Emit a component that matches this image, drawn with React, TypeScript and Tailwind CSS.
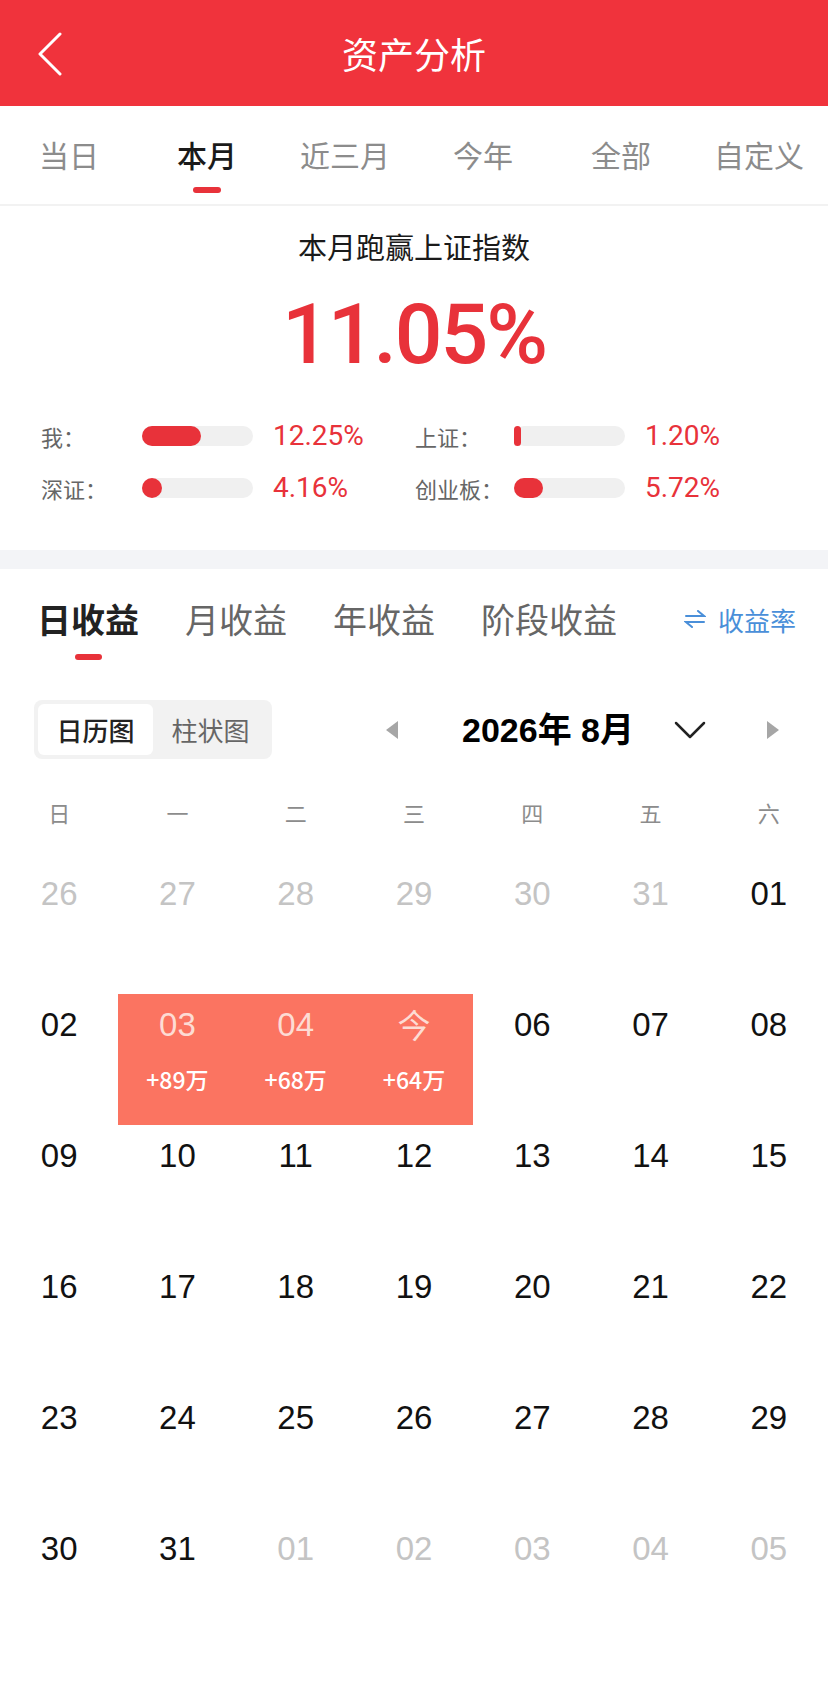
import React from 'react';

const cjk = { fontFamily: '"Noto Sans CJK SC", "Noto Sans", sans-serif' };
const num = { fontFamily: '"Liberation Sans", "Noto Sans CJK SC", sans-serif' };
const din = { fontFamily: 'Roboto, "Noto Sans CJK SC", sans-serif' };

type Day = { label: string; muted?: boolean; hot?: boolean; gain?: string };

const weeks: Day[][] = [
  [
    { label: '26', muted: true },
    { label: '27', muted: true },
    { label: '28', muted: true },
    { label: '29', muted: true },
    { label: '30', muted: true },
    { label: '31', muted: true },
    { label: '01' },
  ],
  [
    { label: '02' },
    { label: '03', hot: true, gain: '+89万' },
    { label: '04', hot: true, gain: '+68万' },
    { label: '今', hot: true, gain: '+64万' },
    { label: '06' },
    { label: '07' },
    { label: '08' },
  ],
  ['09', '10', '11', '12', '13', '14', '15'].map((d) => ({ label: d })),
  ['16', '17', '18', '19', '20', '21', '22'].map((d) => ({ label: d })),
  ['23', '24', '25', '26', '27', '28', '29'].map((d) => ({ label: d })),
  [
    { label: '30' },
    { label: '31' },
    { label: '01', muted: true },
    { label: '02', muted: true },
    { label: '03', muted: true },
    { label: '04', muted: true },
    { label: '05', muted: true },
  ],
];

function Bar({ fill }: { fill: number }) {
  return (
    <div className="h-[20px] rounded-full bg-[#f0f0f0] w-full">
      <div className="h-[20px] rounded-full bg-[#e8323a]" style={{ width: fill }} />
    </div>
  );
}

export default function App() {
  const periods = ['当日', '本月', '近三月', '今年', '全部', '自定义'];
  const kinds = ['日收益', '月收益', '年收益', '阶段收益'];
  const weekdays = ['日', '一', '二', '三', '四', '五', '六'];

  return (
    <div className="w-[828px] min-h-[1697px] bg-white" style={cjk}>
      {/* header */}
      <div className="relative h-[106px] bg-[#f0333c] flex items-center justify-center">
        <svg className="absolute left-[36px] top-[32px]" width="28" height="44" viewBox="0 0 28 44" fill="none">
          <polyline points="24,2 4,22 24,42" stroke="white" strokeWidth="3" strokeLinecap="round" strokeLinejoin="round" />
        </svg>
        <span className="text-white text-[36px] leading-none">资产分析</span>
      </div>

      {/* period tabs */}
      <div className="flex h-[100px] border-b-2 border-[#f2f2f2]">
        {periods.map((p, i) => (
          <div key={p} className="flex-1 flex flex-col items-center pt-[29px]">
            <span className={`text-[30px] leading-[38px] ${i === 1 ? 'text-[#1a1a1a] font-medium' : 'text-[#8c8c8c]'}`}>{p}</span>
            {i === 1 && <div className="mt-[14px] w-[28px] h-[6px] rounded-full bg-[#e8323a]" />}
          </div>
        ))}
      </div>

      {/* summary */}
      <div className="flex flex-col items-center pt-[20px] pb-[47px]">
        <div className="text-[29px] leading-[40px] text-[#1a1a1a]">本月跑赢上证指数</div>
        <div className="mt-[21px] text-[84px] leading-[96px] font-medium text-[#e8323a] tracking-[-2px]" style={din}>
          11.05%
        </div>
        <div className="mt-[38px] w-full pl-[41px] flex flex-col gap-[22px]">
          {[
            [['我：', 59, '12.25%'], ['上证：', 7, '1.20%']],
            [['深证：', 20, '4.16%'], ['创业板：', 29, '5.72%']],
          ].map((row, ri) => (
            <div key={ri} className="flex items-center h-[30px]">
              {row.map(([label, fill, pct], ci) => (
                <div key={ci} className="flex items-center">
                  <span className={`text-[22px] text-[#666] ${ci === 0 ? 'w-[101px]' : 'w-[99px]'}`}>{label as string}</span>
                  <div className="w-[111px]">
                    <Bar fill={fill as number} />
                  </div>
                  <span
                    className={`ml-[20px] text-[28px] text-[#e8323a] ${ci === 0 ? 'w-[142px]' : ''}`}
                    style={din}
                  >
                    {pct as string}
                  </span>
                </div>
              ))}
            </div>
          ))}
        </div>
      </div>

      <div className="h-[19px] bg-[#f3f4f7]" />

      {/* income kinds */}
      <div className="flex items-start pt-[28px] pl-[37px] pr-[32px]">
        <div className="flex gap-[46px]">
          {kinds.map((k, i) => (
            <div key={k} className="flex flex-col items-center">
              <span className={`text-[34px] leading-[44px] ${i === 0 ? 'text-[#222] font-bold' : 'text-[#666]'}`}>{k}</span>
              {i === 0 && <div className="mt-[13px] w-[27px] h-[6px] rounded-full bg-[#e8323a]" />}
            </div>
          ))}
        </div>
        <div className="ml-auto flex items-center gap-[12px] h-[44px] text-[#4a8fd9] text-[26px]">
          <svg width="22" height="18" viewBox="0 0 22 18" fill="none" stroke="#4a8fd9" strokeWidth="2" strokeLinecap="round">
            <path d="M2 6 H20 L14 1" />
            <path d="M20 12 H2 L8 17" />
          </svg>
          <span>收益率</span>
        </div>
      </div>

      {/* toggle + month */}
      <div className="mt-[40px] flex items-center pl-[34px]">
        <div className="w-[238px] h-[59px] rounded-[8px] bg-[#f2f2f2] p-[4px] flex">
          <div className="w-[115px] rounded-[6px] bg-white flex items-center justify-center text-[26px] text-[#222] font-medium">
            日历图
          </div>
          <div className="flex-1 flex items-center justify-center text-[26px] text-[#666]">柱状图</div>
        </div>
        <svg className="ml-[114px]" width="12" height="18" viewBox="0 0 12 18">
          <polygon points="12,0 0,9 12,18" fill="#a6a6a6" />
        </svg>
        <span className="ml-[64px] text-[34px] font-bold text-black leading-none" style={num}>
          2026年 8月
        </span>
        <svg className="ml-[40px]" width="32" height="18" viewBox="0 0 32 18" fill="none">
          <polyline points="2,2 16,16 30,2" stroke="#222" strokeWidth="2.5" strokeLinecap="round" strokeLinejoin="round" />
        </svg>
        <svg className="ml-[61px]" width="12" height="18" viewBox="0 0 12 18">
          <polygon points="0,0 12,9 0,18" fill="#a6a6a6" />
        </svg>
      </div>

      {/* weekdays */}
      <div className="mt-[38px] grid grid-cols-7">
        {weekdays.map((w) => (
          <div key={w} className="text-center text-[22px] leading-[30px] text-[#8c8c8c]">
            {w}
          </div>
        ))}
      </div>

      {/* calendar */}
      <div className="mt-[36px] grid grid-cols-7" style={num}>
        {weeks.flat().map((d, i) => (
          <div
            key={i}
            className={`h-[131px] flex flex-col items-center pt-[14px] ${d.hot ? 'bg-[#fb7461]' : ''}`}
          >
            <span
              className={`text-[33px] leading-[33px] ${
                d.hot ? 'text-[#fddcd4]' : d.muted ? 'text-[#c4c4c4]' : 'text-[#111]'
              }`}
              style={d.label === '今' ? cjk : undefined}
            >
              {d.label}
            </span>
            {d.gain && (
              <span className="mt-[25px] text-[23px] leading-[26px] font-medium text-white" style={cjk}>
                {d.gain}
              </span>
            )}
          </div>
        ))}
      </div>
    </div>
  );
}
